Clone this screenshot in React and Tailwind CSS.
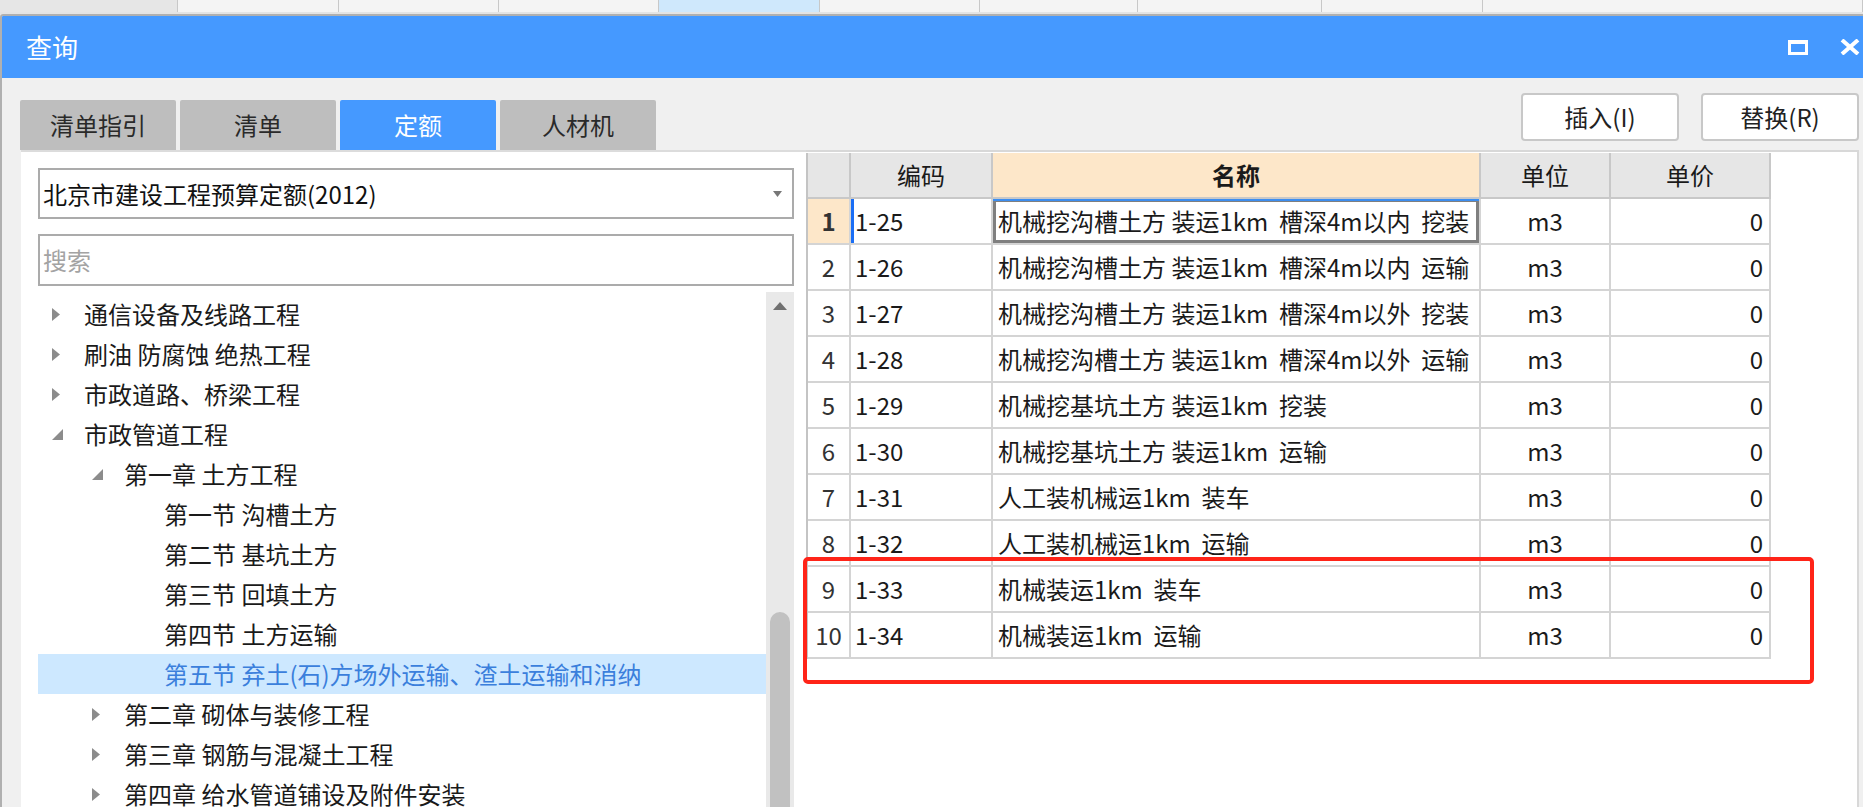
import React from "react";

const stripCells = [
  { w: "w-[178px]", bg: "bg-[#e6e6e6]" },
  { w: "w-[161px]", bg: "bg-[#f4f4f4]" },
  { w: "w-[160px]", bg: "bg-[#f4f4f4]" },
  { w: "w-[160px]", bg: "bg-[#f4f4f4]" },
  { w: "w-[161px]", bg: "bg-[#cfe8fc]" },
  { w: "w-[160px]", bg: "bg-[#f4f4f4]" },
  { w: "w-[158px]", bg: "bg-[#f4f4f4]" },
  { w: "w-[184px]", bg: "bg-[#f4f4f4]" },
  { w: "w-[161px]", bg: "bg-[#f4f4f4]" },
  { w: "flex-1", bg: "bg-[#f4f4f4]" },
];

const tabs = [
  { label: "清单指引" },
  { label: "清单" },
  { label: "定额", active: true },
  { label: "人材机" },
];

const tree = [
  { level: 0, label: "通信设备及线路工程", icon: "closed" },
  { level: 0, label: "刷油 防腐蚀 绝热工程", icon: "closed" },
  { level: 0, label: "市政道路、桥梁工程", icon: "closed" },
  { level: 0, label: "市政管道工程", icon: "open" },
  { level: 1, label: "第一章 土方工程", icon: "open" },
  { level: 2, label: "第一节 沟槽土方" },
  { level: 2, label: "第二节 基坑土方" },
  { level: 2, label: "第三节 回填土方" },
  { level: 2, label: "第四节 土方运输" },
  { level: 2, label: "第五节 弃土(石)方场外运输、渣土运输和消纳", selected: true },
  { level: 1, label: "第二章 砌体与装修工程", icon: "closed" },
  { level: 1, label: "第三章 钢筋与混凝土工程", icon: "closed" },
  { level: 1, label: "第四章 给水管道铺设及附件安装", icon: "closed" },
];

const indent = ["pl-0", "pl-[40px]", "pl-[80px]"];

const rows = [
  ["1-25", "机械挖沟槽土方 装运1km  槽深4m以内  挖装"],
  ["1-26", "机械挖沟槽土方 装运1km  槽深4m以内  运输"],
  ["1-27", "机械挖沟槽土方 装运1km  槽深4m以外  挖装"],
  ["1-28", "机械挖沟槽土方 装运1km  槽深4m以外  运输"],
  ["1-29", "机械挖基坑土方 装运1km  挖装"],
  ["1-30", "机械挖基坑土方 装运1km  运输"],
  ["1-31", "人工装机械运1km  装车"],
  ["1-32", "人工装机械运1km  运输"],
  ["1-33", "机械装运1km  装车"],
  ["1-34", "机械装运1km  运输"],
];

const cols = "grid grid-cols-[43px_142px_488px_130px_160px]";

const Arrow = ({ icon }) => {
  if (icon === "closed")
    return (
      <svg width="8" height="13" viewBox="0 0 8 13">
        <path d="M0 0 L8 6.5 L0 13 Z" fill="#8c8c8c" />
      </svg>
    );
  if (icon === "open")
    return (
      <svg width="11" height="11" viewBox="0 0 11 11">
        <path d="M11 0 L11 11 L0 11 Z" fill="#8c8c8c" />
      </svg>
    );
  return null;
};

export default function App() {
  return (
    <div className="w-[1863px] h-[807px] overflow-hidden flex flex-col bg-[#f0f0f0] font-['Noto_Sans_CJK_SC','Microsoft_YaHei',sans-serif] text-[#1a1a1a]">
      {/* strip of the window behind */}
      <div className="flex h-[12px] shrink-0">
        {stripCells.map((c, i) => (
          <div key={i} className={`${c.w} ${c.bg} border-r border-[#c8c8c8]`}></div>
        ))}
      </div>
      <div className="h-[2px] shrink-0 bg-[#e4e4e4]"></div>

      {/* dialog */}
      <div className="flex-1 min-h-0 overflow-hidden flex flex-col border-l-2 border-t-2 border-[#b0b0b0] rounded-tl-[3px]">
        <div className="h-[62px] shrink-0 bg-[#4599ff] flex items-center justify-between pl-[24px] pr-[3px]">
          <span className="text-white text-[26px] leading-none">查询</span>
          <div className="flex items-center gap-[32px]">
            <div className="w-[20px] h-[15px] border-[3px] border-t-[4px] border-white"></div>
            <svg width="20" height="16" viewBox="0 0 20 16">
              <path d="M2 1 L18 15 M18 1 L2 15" stroke="#fff" strokeWidth="4" />
            </svg>
          </div>
        </div>

        <div className="h-[72px] shrink-0 flex justify-between">
          <div className="flex items-end gap-[4px] pl-[18px]">
            {tabs.map((t) => (
              <div
                key={t.label}
                className={`w-[156px] h-[50px] rounded-t-[2px] flex items-center justify-center text-[24px] leading-none ${
                  t.active ? "bg-[#4599ff] text-white" : "bg-[#bebebe] text-[#2a2a2a]"
                }`}
              >
                {t.label}
              </div>
            ))}
          </div>
          <div className="flex gap-[22px] pt-[15px] pr-[4px]">
            <button className="w-[158px] h-[48px] bg-white border-2 border-[#c8c8c8] rounded-[4px] text-[24px] leading-none text-[#222]">
              插入(I)
            </button>
            <button className="w-[158px] h-[48px] bg-white border-2 border-[#c8c8c8] rounded-[4px] text-[24px] leading-none text-[#222]">
              替换(R)
            </button>
          </div>
        </div>

        <div className="flex-1 flex pl-[19px] min-h-0">
          {/* left panel */}
          <div className="w-[785px] bg-white border-t-2 border-[#dcdcdc] flex flex-col pl-[17px] pr-[12px] overflow-hidden">
            <div className="mt-[16px] h-[51px] shrink-0 border-2 border-[#ababab] flex items-center justify-between pl-[3px] pr-[10px]">
              <span className="text-[24px] leading-none text-[#111]">北京市建设工程预算定额(2012)</span>
              <svg width="9" height="6" viewBox="0 0 9 6">
                <path d="M0 0 L9 0 L4.5 6 Z" fill="#777" />
              </svg>
            </div>
            <div className="mt-[15px] h-[52px] shrink-0 border-2 border-[#ababab] flex items-center pl-[3px]">
              <span className="text-[24px] leading-none text-[#a3a3a3]">搜索</span>
            </div>
            <div className="mt-[6px] flex-1 flex min-h-0">
              <div className="flex-1 pt-[2px]">
                {tree.map((n) => (
                  <div
                    key={n.label}
                    className={`h-[40px] flex items-center ${indent[n.level]} ${
                      n.selected ? "bg-[#cde8ff] text-[#3b7fdc]" : ""
                    }`}
                  >
                    <div className="w-[46px] pl-[14px] flex items-center">
                      <Arrow icon={n.icon} />
                    </div>
                    <span className="text-[24px] leading-none whitespace-nowrap">{n.label}</span>
                  </div>
                ))}
              </div>
              <div className="w-[28px] bg-[#e9e9e9] flex flex-col">
                <div className="h-[28px] shrink-0 flex items-center justify-center">
                  <svg width="14" height="8" viewBox="0 0 14 8">
                    <path d="M0 8 L7 0 L14 8 Z" fill="#707070" />
                  </svg>
                </div>
                <div className="h-[292px] shrink-0"></div>
                <div className="flex-1 mx-[4px] bg-[#c1c1c1] rounded-t-[10px]"></div>
              </div>
            </div>
          </div>

          {/* right panel */}
          <div className="relative flex-1 mr-[4px] bg-white border-t-2 border-r-2 border-[#d8d8d8]">
            <div className="mt-[1px] w-[965px] border-l-2 border-[#c4c4c4] text-[24px] leading-none">
              <div className={`${cols} h-[46px] bg-[#e6e6e6]`}>
                <div className="border-r-2 border-b-2 border-[#c8c8c8]"></div>
                <div className="border-r-2 border-b-2 border-[#c8c8c8] flex items-center justify-center">编码</div>
                <div className="border-r-2 border-b-2 border-[#c8c8c8] bg-[#fde7c9] flex items-center justify-center font-bold">名称</div>
                <div className="border-r-2 border-b-2 border-[#c8c8c8] flex items-center justify-center">单位</div>
                <div className="border-r-2 border-b-2 border-[#c8c8c8] flex items-center justify-center">单价</div>
              </div>
              {rows.map(([code, name], i) => (
                <div key={code} className={`${cols} h-[46px]`}>
                  <div
                    className={`border-r-2 border-b-2 border-[#d4d4d4] flex items-center justify-center text-[#333] ${
                      i === 0 ? "bg-[#fde7c9] font-bold text-[#222]" : ""
                    }`}
                  >
                    {i + 1}
                  </div>
                  <div
                    className={`border-r-2 border-b-2 border-[#d4d4d4] flex items-center pl-[4px] ${
                      i === 0 ? "shadow-[inset_3px_0_0_#1a6ef5]" : ""
                    }`}
                  >
                    {code}
                  </div>
                  <div
                    className={`border-r-2 border-b-2 border-[#d4d4d4] flex items-center pl-[5px] whitespace-pre ${
                      i === 0 ? "shadow-[inset_0_2px_0_#3d8ef0,inset_0_0_0_3px_#7f7f7f]" : ""
                    }`}
                  >
                    {name}
                  </div>
                  <div className="border-r-2 border-b-2 border-[#d4d4d4] flex items-center justify-center">m3</div>
                  <div className="border-r-2 border-b-2 border-[#d4d4d4] flex items-center justify-end pr-[6px]">0</div>
                </div>
              ))}
            </div>

            {/* red annotation box */}
            <div className="absolute left-[-3px] top-[405px] w-[1011px] h-[127px] border-[4px] border-[#ff2418] rounded-[5px]"></div>
          </div>
        </div>
      </div>
    </div>
  );
}
